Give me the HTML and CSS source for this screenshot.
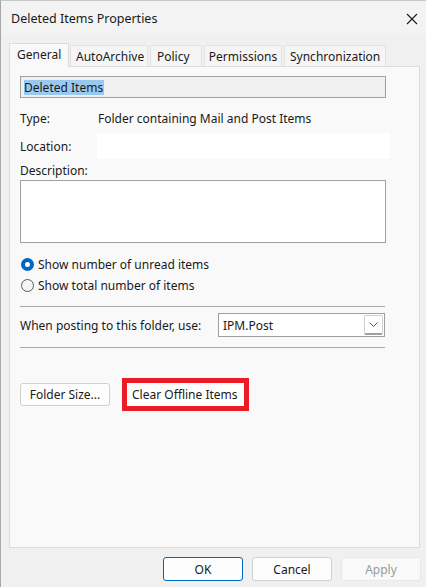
FILE: index.html
```html
<!DOCTYPE html>
<html lang="en">
<head>
  <meta charset="UTF-8">
  <meta name="viewport" content="width=device-width, initial-scale=1.0">
  <title>Deleted Items Properties</title>
  <link rel="stylesheet" href="styles.css">
</head>
<body>
  <div class="dialog">
    <div class="titlebar">
      <span class="title">Deleted Items Properties</span>
      <svg class="close" width="12" height="12" viewBox="0 0 12 12">
        <path d="M1 1 L11 11 M11 1 L1 11" stroke="#1a1a1a" stroke-width="1.1" fill="none"/>
      </svg>
    </div>

    <div class="tabs">
      <div class="tab active">General</div>
      <div class="tab">AutoArchive</div>
      <div class="tab">Policy</div>
      <div class="tab">Permissions</div>
      <div class="tab">Synchronization</div>
    </div>

    <div class="panel">
      <div class="name-field"><span class="selected">Deleted Items</span></div>

      <div class="row type-row">
        <span class="label">Type:</span>
        <span>Folder containing Mail and Post Items</span>
      </div>
      <div class="row location-row">
        <span class="label">Location:</span>
        <div class="location-box"></div>
      </div>
      <div class="desc-label">Description:</div>
      <div class="desc-box"></div>

      <div class="radio-row">
        <span class="radio checked"></span>
        <span>Show number of unread items</span>
      </div>
      <div class="radio-row">
        <span class="radio"></span>
        <span>Show total number of items</span>
      </div>

      <div class="sep first"></div>
      <div class="row posting-row">
        <span class="posting-label">When posting to this folder, use:</span>
        <div class="combo">
          <span>IPM.Post</span>
          <span class="combo-btn">
            <svg width="9" height="5" viewBox="0 0 9 5"><path d="M0.5 0.5 L4.5 4.5 L8.5 0.5" stroke="#555" fill="none"/></svg>
          </span>
        </div>
      </div>
      <div class="sep second"></div>

      <div class="action-row">
        <button class="btn folder-size">Folder Size...</button>
        <div class="highlight">
          <button class="btn clear-offline">Clear Offline Items</button>
        </div>
      </div>
    </div>

    <div class="footer">
      <button class="btn footer-btn default">OK</button>
      <button class="btn footer-btn">Cancel</button>
      <button class="btn footer-btn" disabled>Apply</button>
    </div>
  </div>
</body>
</html>
```

FILE: styles.css
```css
* { box-sizing: border-box; }
body { margin: 0; font-family: "Noto Sans", "Open Sans", sans-serif; font-size: 12px; color: #1a1a1a; background: #f0f0f0; }
.dialog { width: 426px; height: 587px; background: #f0f0f0; border-left: 1px solid #a8a8a8; border-top: 1px solid #c8c8c8; }

.titlebar { height: 34px; background: #f3f3f3; display: flex; align-items: center; justify-content: space-between; padding: 0 8px 0 10px; }
.title { font-size: 12.5px; color: #1a1a1a; }
.close { margin-top: 1px; }

.tabs { display: flex; align-items: flex-end; height: 31px; padding-left: 8px; gap: 1px; }
.tab { height: 21px; padding: 0 5px; display: flex; align-items: center; background: #f5f5f5; border: 1px solid #e2e2e2; border-bottom: none; margin-bottom: 0; }
.tab:nth-child(2) { width: 78px; }
.tab:nth-child(3) { width: 52px; margin-left: 1px; padding-left: 6px; }
.tab:nth-child(4) { width: 78px; margin-left: 1px; justify-content: center; }
.tab:nth-child(5) { width: 102px; margin-left: 1px; }
.tab.active { height: 24px; width: 60px; background: #f9f9f9; border-color: #dcdcdc; margin-bottom: -1px; position: relative; z-index: 1; padding: 0 0 3px 7px; }

.panel { margin-left: 8px; width: 411px; height: 482px; background: #f9f9f9; border: 1px solid #dcdcdc; padding: 9px 0 0 10px; }

.name-field { width: 366px; height: 22px; background: #f0f0f0; border: 1px solid #a0a0a0; padding: 2px 3px; display: flex; align-items: center; }
.selected { background: #99c9ef; line-height: 15px; padding-right: 1px; }

.row { display: flex; align-items: center; }
.label { width: 78px; }
.type-row { margin-top: 11px; height: 19px; }
.location-row { margin-top: 5px; height: 26px; }
.location-box { width: 293px; height: 26px; background: #fff; margin-left: -1px; }
.desc-label { margin-top: 2px; height: 19px; line-height: 19px; }
.desc-box { margin-top: 0; width: 366px; height: 63px; background: #fff; border: 1px solid #a0a0a0; }

.radio-row { display: flex; align-items: center; gap: 4px; height: 21px; padding-left: 1px; }
.desc-box + .radio-row { margin-top: 11px; }
.radio { width: 13px; height: 13px; border-radius: 50%; border: 1px solid #5a5a5a; background: #f6f6f6; }
.radio.checked { border: 4px solid #0067c0; background: #fff; }

.sep { width: 365px; height: 1px; background: #a8a8a8; }
.sep.first { margin-top: 10px; }
.posting-row { margin-top: 6px; height: 24px; }
.posting-label { width: 198px; }
.combo { width: 167px; height: 24px; background: #fff; border: 1px solid #a0a0a0; display: flex; align-items: center; justify-content: space-between; padding: 0 1px 0 4px; }
.combo-btn { width: 19px; height: 20px; border: 1px solid #d0d0d0; border-bottom: 2px solid #a0a0a0; border-radius: 2px; display: flex; align-items: center; justify-content: center; }
.sep.second { margin-top: 10px; }

.action-row { display: flex; align-items: center; gap: 12px; margin-top: 30px; }
.btn { font-family: inherit; font-size: 12px; color: #1a1a1a; background: #fdfdfd; border: 1px solid #d0d0d0; border-radius: 3px; height: 23px; padding: 0; }
.folder-size { width: 90px; }
.highlight { border: 5px solid #ed1c24; }
.clear-offline { width: 117px; border-color: #fff; background: #fff; border-radius: 0; text-align: left; padding-left: 4px; }

.footer { display: flex; justify-content: flex-end; gap: 9px; padding: 9px 5px 0 0; }
.footer-btn { width: 80px; height: 24px; }
.footer-btn.default { border-color: #0067c0; }
.footer-btn:disabled { color: #9a9a9a; border-color: #e8e8e8; background: #f9f9f9; }
```
